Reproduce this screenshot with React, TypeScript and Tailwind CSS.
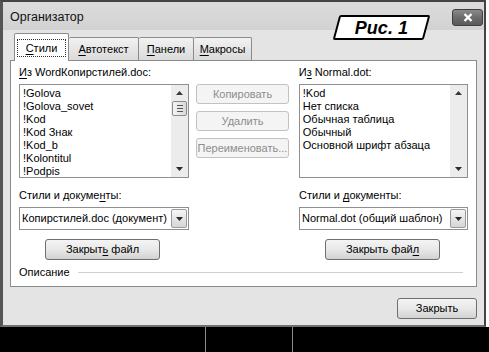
const ui = "font-['Liberation_Sans',Arial,sans-serif]";

function U({ children }: { children: string }) {
  return <span className="underline underline-offset-2 decoration-1">{children}</span>;
}

function ArrowUp() {
  return (
    <svg width="7" height="4" viewBox="0 0 7 4">
      <path d="M0 4 L3.5 0 L7 4 Z" fill="#3a3a3a" />
    </svg>
  );
}

function ArrowDown() {
  return (
    <svg width="7" height="4" viewBox="0 0 7 4">
      <path d="M0 0 L7 0 L3.5 4 Z" fill="#2a2a2a" />
    </svg>
  );
}

function ListBox({ items, thumb }: { items: string[]; thumb?: boolean }) {
  return (
    <div className="flex h-[94px] border border-[#8e8f8f] bg-white">
      <div className="flex-1 overflow-hidden pl-[3px] pt-[2px] text-[11px] leading-[13px] text-black">
        {items.map((i) => (
          <div key={i} className="whitespace-nowrap">
            {i}
          </div>
        ))}
      </div>
      <div className="flex w-[17px] flex-col items-center bg-[#ececec]">
        <div className="flex h-[16px] items-center justify-center">
          <ArrowUp />
        </div>
        {thumb && (
          <div className="flex h-[15px] w-[15px] flex-col items-center justify-center gap-[2px] rounded-[2px] border border-[#8c8c8c] bg-linear-to-r from-[#f4f4f4] to-[#d9d9d9]">
            <div className="h-px w-[6px] bg-[#555]" />
            <div className="h-px w-[6px] bg-[#555]" />
            <div className="h-px w-[6px] bg-[#555]" />
          </div>
        )}
        <div className="flex-1" />
        <div className="flex h-[16px] items-center justify-center">
          <ArrowDown />
        </div>
      </div>
    </div>
  );
}

function Combo({ value }: { value: string }) {
  return (
    <div className="flex h-[23px] border border-[#8e8f8f] bg-white">
      <div className="flex-1 overflow-hidden whitespace-nowrap pl-[2px] text-[11px] leading-[21px] text-black">
        {value}
      </div>
      <div className="m-px flex w-[16px] items-center justify-center rounded-[2px] border border-[#9a9a9a] bg-linear-to-b from-[#f6f6f6] to-[#d6d6d6]">
        <ArrowDown />
      </div>
    </div>
  );
}

function Button({ children, className }: { children: React.ReactNode; className?: string }) {
  return (
    <div
      className={`flex h-[21px] items-center justify-center rounded-[3px] border border-[#6f6f6f] bg-linear-to-b from-[#f4f4f4] via-[#e8e8e8] to-[#d2d2d2] text-[11px] text-black ${className ?? ""}`}
    >
      {children}
    </div>
  );
}

function DisabledButton({ children }: { children: string }) {
  return (
    <div className="flex h-[20px] items-center justify-center rounded-[3px] border border-[#c2c2c2] bg-[#f4f4f4] text-[11px] text-[#8d8d8d] whitespace-nowrap">
      {children}
    </div>
  );
}

export default function App() {
  return (
    <div className={`${ui} flex h-[352px] w-[489px] flex-col bg-white`}>
      <div className="flex h-[327px]">
        <div className="relative flex w-[486px] flex-col border-b-2 border-l-[3px] border-r-2 border-t-2 border-b-[#707070] border-l-[#555] border-r-[#444] border-t-[#444] bg-[#e4e4e4]">
          {/* title bar */}
          <div className="flex h-[28px] items-start bg-linear-to-b from-[#dcdcdc] to-[#d2d2d2]">
            <div className="ml-[7px] mt-[8px] text-[12.5px] leading-[15px] text-[#111]">Организатор</div>
            <div className="ml-auto mr-px mt-[7px] flex h-[17px] w-[31px] items-center justify-center rounded-[3px] border border-[#3e3e3e] bg-linear-to-b from-[#8a8a8a] via-[#6c6c6c] to-[#5a5a5a]">
              <svg width="10" height="9" viewBox="0 0 10 9">
                <path d="M1.5 1 L8.5 8 M8.5 1 L1.5 8" stroke="#fff" strokeWidth="2.4" />
              </svg>
            </div>
          </div>

          {/* figure label */}
          <div className="absolute left-[333px] top-[13px] flex h-[25px] w-[91px] -skew-x-[15deg] items-center justify-center rounded-[2px] border-2 border-black bg-white">
            <span className="skew-x-[15deg] text-[18px] font-bold italic leading-none text-black">Рис. 1</span>
          </div>

          {/* tabs */}
          <div className="ml-[9px] mt-[3px] flex items-end pl-[2px] text-[11px] text-black">
            <div className="relative z-10 -mb-px flex h-[28px] w-[55px] items-center justify-center rounded-t-[2px] border border-b-0 border-[#8b8b8b] bg-white">
              <span className="border border-dotted border-[#333] px-[8px] leading-[16px]">
                <U>С</U>тили
              </span>
            </div>
            <div className="flex h-[23px] w-[70px] items-center justify-center rounded-t-[2px] border border-b-0 border-l-0 border-[#8b8b8b] bg-linear-to-b from-[#f2f2f2] to-[#dadada]">
              <U>А</U>втотекст
            </div>
            <div className="flex h-[23px] w-[55px] items-center justify-center rounded-t-[2px] border border-b-0 border-l-0 border-[#8b8b8b] bg-linear-to-b from-[#f2f2f2] to-[#dadada]">
              <U>П</U>анели
            </div>
            <div className="flex h-[23px] w-[58px] items-center justify-center rounded-t-[2px] border border-b-0 border-l-0 border-[#8b8b8b] bg-linear-to-b from-[#f2f2f2] to-[#dadada]">
              <U>М</U>акросы
            </div>
          </div>

          {/* tab panel */}
          <div className="ml-[7px] flex h-[227px] w-[467px] flex-col border border-[#8b8b8b] bg-white px-[8px] pt-[4px] text-[11px] text-black">
            <div className="flex">
              <div className="flex w-[171px] flex-col">
                <div className="mb-[5px] h-[14px] leading-[14px] whitespace-nowrap">
                  <U>И</U>з WordКопирстилей.doc:
                </div>
                <ListBox
                  thumb
                  items={["!Golova", "!Golova_sovet", "!Kod", "!Kod Знак", "!Kod_b", "!Kolontitul", "!Podpis"]}
                />
              </div>
              <div className="ml-[7px] mt-[19px] flex w-[93px] flex-col gap-[7px]">
                <DisabledButton>Копировать</DisabledButton>
                <DisabledButton>Удалить</DisabledButton>
                <DisabledButton>Переименовать...</DisabledButton>
              </div>
              <div className="ml-[10px] flex w-[170px] flex-col">
                <div className="mb-[5px] h-[14px] leading-[14px]">
                  И<U>з</U> Normal.dot:
                </div>
                <ListBox items={["!Kod", "Нет списка", "Обычная таблица", "Обычный", "Основной шрифт абзаца"]} />
              </div>
            </div>

            <div className="mt-[10px] flex">
              <div className="flex w-[171px] flex-col">
                <div className="mb-[5px] h-[14px] leading-[14px]">
                  Стили и докуме<U>н</U>ты:
                </div>
                <Combo value="Копирстилей.doc (документ)" />
                <Button className="ml-[26px] mt-[9px] w-[115px]">
                  <span>
                    Закрыт<U>ь</U> файл
                  </span>
                </Button>
              </div>
              <div className="ml-[110px] flex w-[170px] flex-col">
                <div className="mb-[5px] h-[14px] leading-[14px]">
                  Стили и <U>д</U>окументы:
                </div>
                <Combo value="Normal.dot (общий шаблон)" />
                <Button className="ml-[26px] mt-[9px] w-[115px]">
                  <span>
                    Закрыть фай<U>л</U>
                  </span>
                </Button>
              </div>
            </div>

            <div className="mt-[5px] flex h-[14px] items-center pr-[5px]">
              <span className="leading-[14px]">Описание</span>
              <div className="ml-[8px] h-px flex-1 bg-[#d0d0d0]" />
            </div>
          </div>

          {/* footer */}
          <div className="mt-[11px] flex pr-[7px]">
            <Button className="ml-auto h-[21px] w-[80px]">Закрыть</Button>
          </div>
        </div>
        <div className="flex-1 bg-white" />
      </div>
      <div className="flex h-[25px] bg-black">
        <div className="w-[205px]" />
        <div className="w-[88px] border-x border-[#8a8a8a]" />
        <div className="flex-1" />
      </div>
    </div>
  );
}
